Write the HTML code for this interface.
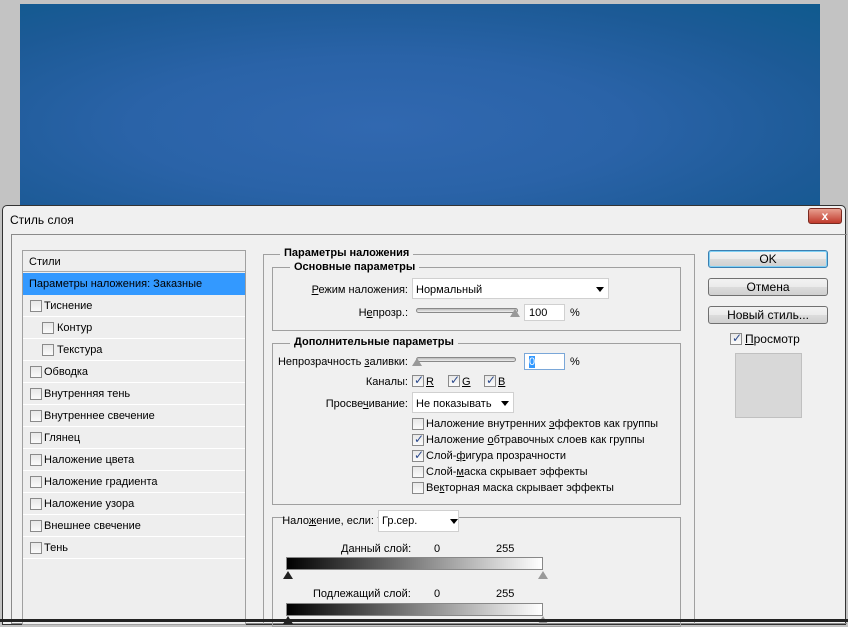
<!DOCTYPE html>
<html><head><meta charset="utf-8"><style>
*{box-sizing:border-box;margin:0;padding:0}
body{width:848px;height:622px;overflow:hidden;background:#c3c3c3;position:relative;font-family:"Liberation Sans","DejaVu Sans",sans-serif;font-size:11px;color:#000}
.a{position:absolute;white-space:nowrap}
.r{position:absolute;white-space:nowrap;text-align:right}
.blue{left:20px;top:4px;width:800px;height:203px;background:radial-gradient(ellipse at 45% 60%,#3168b0 0%,#2a63a8 40%,#1c5a96 75%,#0f5a8e 100%)}
.dlg{left:2px;top:205px;width:844px;height:420px;background:#f0f0f0;border:1px solid #333;border-radius:5px 5px 0 0}
.cb{position:absolute;width:12px;height:12px;border:1px solid #8a8a8a;background:linear-gradient(#e8e8e8,#fafafa)}
.ck::after{content:"✓";position:absolute;left:1px;top:-3px;font-size:12px;color:#2c4a8c;font-weight:bold}
.row{position:absolute;left:23px;width:222px;height:22px;border-bottom:1px solid #fff}
.row span{position:absolute;top:5px}
.grp{position:absolute;border:1px solid #a0a0a0}
.lg{position:absolute;background:#f0f0f0;font-weight:bold;padding:0 4px;font-size:11px}
.btn{position:absolute;left:708px;width:120px;height:18px;border:1px solid #707070;border-radius:3px;background:linear-gradient(#f2f2f2,#ebebeb 50%,#dcdcdc 51%,#cfcfcf);text-align:center;font-size:12px;line-height:16px}
.inp{position:absolute;background:#fff;border:1px solid #d0d0d0}
.slider{position:absolute;height:5px;border:1px solid #888;border-radius:3px;background:linear-gradient(#bbb,#eee)}
.tri{position:absolute;width:0;height:0;border-left:5px solid transparent;border-right:5px solid transparent;border-bottom:8px solid #888}
u{text-decoration:underline}
</style></head><body>
<div class="a blue"></div>
<div class="a dlg"></div>
<div class="a" style="left:808px;top:208px;width:34px;height:16px;border-radius:3px;background:linear-gradient(#e8a090,#c0392b);border:1px solid #7a2a20;color:#fff;font-weight:bold;text-align:center;line-height:14px;font-size:12px">x</div>
<div class="a" style="left:10px;top:213px;font-size:12px">Стиль слоя</div>
<div class="a" style="left:11px;top:234px;width:836px;height:390px;border:1px solid #8a8a8a;border-right:none"></div>
<!-- left list -->
<div class="a" style="left:22px;top:250px;width:224px;height:375px;border:1px solid #a0a0a0;background:#eeeeee"></div>
<div class="row" style="top:251px;height:21px;border-bottom:1px solid #aaa"><span style="left:6px">Стили</span></div>
<div class="row" style="top:273px;background:#3399ff;height:22px;border:none"><span style="left:6px">Параметры наложения: Заказные</span></div>
<div class="row" style="top:295px"><div class="cb" style="left:7px;top:5px"></div><span style="left:21px">Тиснение</span></div>
<div class="row" style="top:317px"><div class="cb" style="left:19px;top:5px"></div><span style="left:34px">Контур</span></div>
<div class="row" style="top:339px"><div class="cb" style="left:19px;top:5px"></div><span style="left:34px">Текстура</span></div>
<div class="row" style="top:361px"><div class="cb" style="left:7px;top:5px"></div><span style="left:21px">Обводка</span></div>
<div class="row" style="top:383px"><div class="cb" style="left:7px;top:5px"></div><span style="left:21px">Внутренняя тень</span></div>
<div class="row" style="top:405px"><div class="cb" style="left:7px;top:5px"></div><span style="left:21px">Внутреннее свечение</span></div>
<div class="row" style="top:427px"><div class="cb" style="left:7px;top:5px"></div><span style="left:21px">Глянец</span></div>
<div class="row" style="top:449px"><div class="cb" style="left:7px;top:5px"></div><span style="left:21px">Наложение цвета</span></div>
<div class="row" style="top:471px"><div class="cb" style="left:7px;top:5px"></div><span style="left:21px">Наложение градиента</span></div>
<div class="row" style="top:493px"><div class="cb" style="left:7px;top:5px"></div><span style="left:21px">Наложение узора</span></div>
<div class="row" style="top:515px"><div class="cb" style="left:7px;top:5px"></div><span style="left:21px">Внешнее свечение</span></div>
<div class="row" style="top:537px"><div class="cb" style="left:7px;top:5px"></div><span style="left:21px">Тень</span></div>
<!-- middle groups -->
<div class="grp" style="left:263px;top:254px;width:432px;height:370px;border-bottom:none"></div>
<div class="lg" style="left:280px;top:247px">Параметры наложения</div>
<div class="grp" style="left:272px;top:267px;width:409px;height:64px"></div>
<div class="lg" style="left:290px;top:261px">Основные параметры</div>
<div class="r" style="right:440px;top:284px"><u>Р</u>ежим наложения:</div>
<div class="inp" style="left:412px;top:278px;width:197px;height:21px"></div>
<div class="a" style="left:416px;top:284px">Нормальный</div>
<div class="a" style="left:596px;top:287px;border-left:4px solid transparent;border-right:4px solid transparent;border-top:5px solid #000"></div>
<div class="r" style="right:440px;top:307px">Н<u>е</u>прозр.:</div>
<div class="slider" style="left:416px;top:308px;width:102px"></div>
<div class="tri" style="left:510px;top:309px;border-bottom-color:#999"></div>
<div class="inp" style="left:524px;top:304px;width:41px;height:17px"></div>
<div class="a" style="left:529px;top:307px">100</div>
<div class="a" style="left:570px;top:307px">%</div>
<div class="grp" style="left:272px;top:343px;width:409px;height:162px"></div>
<div class="lg" style="left:290px;top:336px">Дополнительные параметры</div>
<div class="r" style="right:440px;top:356px">Непрозрачность <u>з</u>аливки:</div>
<div class="slider" style="left:416px;top:357px;width:100px"></div>
<div class="tri" style="left:412px;top:358px;border-bottom-color:#999"></div>
<div class="inp" style="left:524px;top:353px;width:41px;height:17px;border-color:#7aa7d8"></div>
<div class="a" style="left:529px;top:356px;background:#3399ff;color:#fff;width:6px">0</div>
<div class="a" style="left:570px;top:356px">%</div>
<div class="r" style="right:440px;top:376px">Каналы:</div>
<div class="cb ck" style="left:412px;top:375px"></div><div class="a" style="left:426px;top:376px"><u>R</u></div>
<div class="cb ck" style="left:448px;top:375px"></div><div class="a" style="left:462px;top:376px"><u>G</u></div>
<div class="cb ck" style="left:484px;top:375px"></div><div class="a" style="left:498px;top:376px"><u>B</u></div>
<div class="r" style="right:440px;top:398px">Просве<u>ч</u>ивание:</div>
<div class="inp" style="left:412px;top:392px;width:102px;height:21px"></div>
<div class="a" style="left:416px;top:398px">Не показывать</div>
<div class="a" style="left:501px;top:401px;border-left:4px solid transparent;border-right:4px solid transparent;border-top:5px solid #000"></div>
<div class="cb" style="left:412px;top:418px"></div><div class="a" style="left:426px;top:418px">Наложение внутренних <u>э</u>ффектов как группы</div>
<div class="cb ck" style="left:412px;top:434px"></div><div class="a" style="left:426px;top:434px">Наложение <u>о</u>бтравочных слоев как группы</div>
<div class="cb ck" style="left:412px;top:450px"></div><div class="a" style="left:426px;top:450px">Слой-<u>ф</u>игура прозрачности</div>
<div class="cb" style="left:412px;top:466px"></div><div class="a" style="left:426px;top:466px">Слой-<u>м</u>аска скрывает эффекты</div>
<div class="cb" style="left:412px;top:482px"></div><div class="a" style="left:426px;top:482px">Ве<u>к</u>торная маска скрывает эффекты</div>
<div class="grp" style="left:272px;top:517px;width:409px;height:110px"></div>
<div class="a" style="left:285px;top:511px;width:92px;height:12px;background:#f0f0f0"></div>
<div class="r" style="right:474px;top:515px">Нало<u>ж</u>ение, если:</div>
<div class="inp" style="left:378px;top:510px;width:81px;height:22px"></div>
<div class="a" style="left:382px;top:515px">Гр.сер.</div>
<div class="a" style="left:450px;top:519px;border-left:4px solid transparent;border-right:4px solid transparent;border-top:5px solid #000"></div>
<div class="a" style="left:341px;top:543px">Данный слой:</div>
<div class="a" style="left:434px;top:543px">0</div><div class="a" style="left:496px;top:543px">255</div>
<div class="a" style="left:286px;top:557px;width:257px;height:13px;border:1px solid #888;background:linear-gradient(90deg,#000,#fff)"></div>
<div class="tri" style="left:283px;top:571px;border-bottom-color:#222"></div>
<div class="tri" style="left:538px;top:571px;border-bottom-color:#999"></div>
<div class="a" style="left:313px;top:588px">Подлежащий слой:</div>
<div class="a" style="left:434px;top:588px">0</div><div class="a" style="left:496px;top:588px">255</div>
<div class="a" style="left:286px;top:603px;width:257px;height:13px;border:1px solid #888;background:linear-gradient(90deg,#000,#fff)"></div>
<div class="tri" style="left:283px;top:616px;border-bottom-color:#222"></div>
<div class="tri" style="left:538px;top:616px;border-bottom-color:#999"></div>
<!-- buttons -->
<div class="btn" style="top:250px;border-color:#3c7fb1;box-shadow:inset 0 0 0 1px #7fd0f5">OK</div>
<div class="btn" style="top:278px">Отмена</div>
<div class="btn" style="top:306px">Новый стиль...</div>
<div class="cb ck" style="left:730px;top:333px"></div>
<div class="a" style="left:745px;top:332px;font-size:12px"><u>П</u>росмотр</div>
<div class="a" style="left:735px;top:353px;width:67px;height:65px;border:1px solid #c0c0c0;background:#d8d8d8"></div>
<div class="a" style="left:0;top:619px;width:848px;height:3px;background:#222"></div>
</body></html>
